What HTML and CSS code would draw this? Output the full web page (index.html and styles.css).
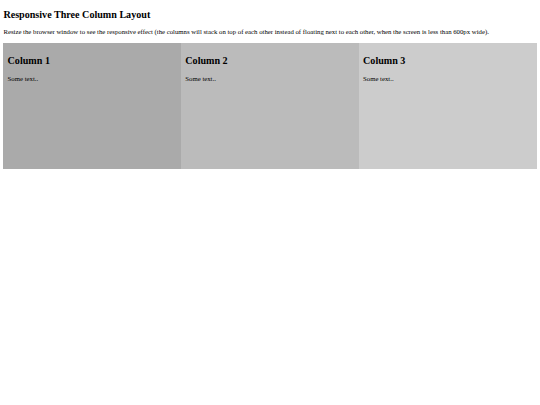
FILE: index.html
```html
<!DOCTYPE html>
<html>
<head>
<meta charset="utf-8">
<link rel="stylesheet" href="styles.css">
</head>
<body>
<h2 class="title">Responsive Three Column Layout</h2>
<p class="intro">Resize the browser window to see the responsive effect (the columns will stack on top of each other instead of floating next to each other, when the screen is less than 600px wide).</p>
<div class="row">
  <div class="column c1">
    <h2 class="col-title">Column 1</h2>
    <p class="col-text">Some text..</p>
  </div>
  <div class="column c2">
    <h2 class="col-title">Column 2</h2>
    <p class="col-text">Some text..</p>
  </div>
  <div class="column c3">
    <h2 class="col-title">Column 3</h2>
    <p class="col-text">Some text..</p>
  </div>
</div>
</body>
</html>
```
FILE: styles.css
```css
* { box-sizing: border-box; }
html, body { background: #fff; }
body {
  margin: 0.4px 3.4px 3.4px;
  font-family: "Liberation Serif", "Times New Roman", serif;
  color: #000;
}
.title {
  font-size: 10.1px;
  font-weight: bold;
  margin: 8.4px 0;
}
.intro {
  font-size: 6.75px;
  margin: 6.72px 0 7.7px;
}
.row {
  display: flex;
}
.column {
  flex: 1 1 0;
  height: 126px;
  padding: 4.2px;
}
.c1 { background: #aaa; }
.c2 { background: #bbb; }
.c3 { background: #ccc; }
.col-title {
  font-size: 10.1px;
  font-weight: bold;
  margin: 8.4px 0;
}
.col-text {
  font-size: 6.75px;
  margin: 6.72px 0;
}
```
